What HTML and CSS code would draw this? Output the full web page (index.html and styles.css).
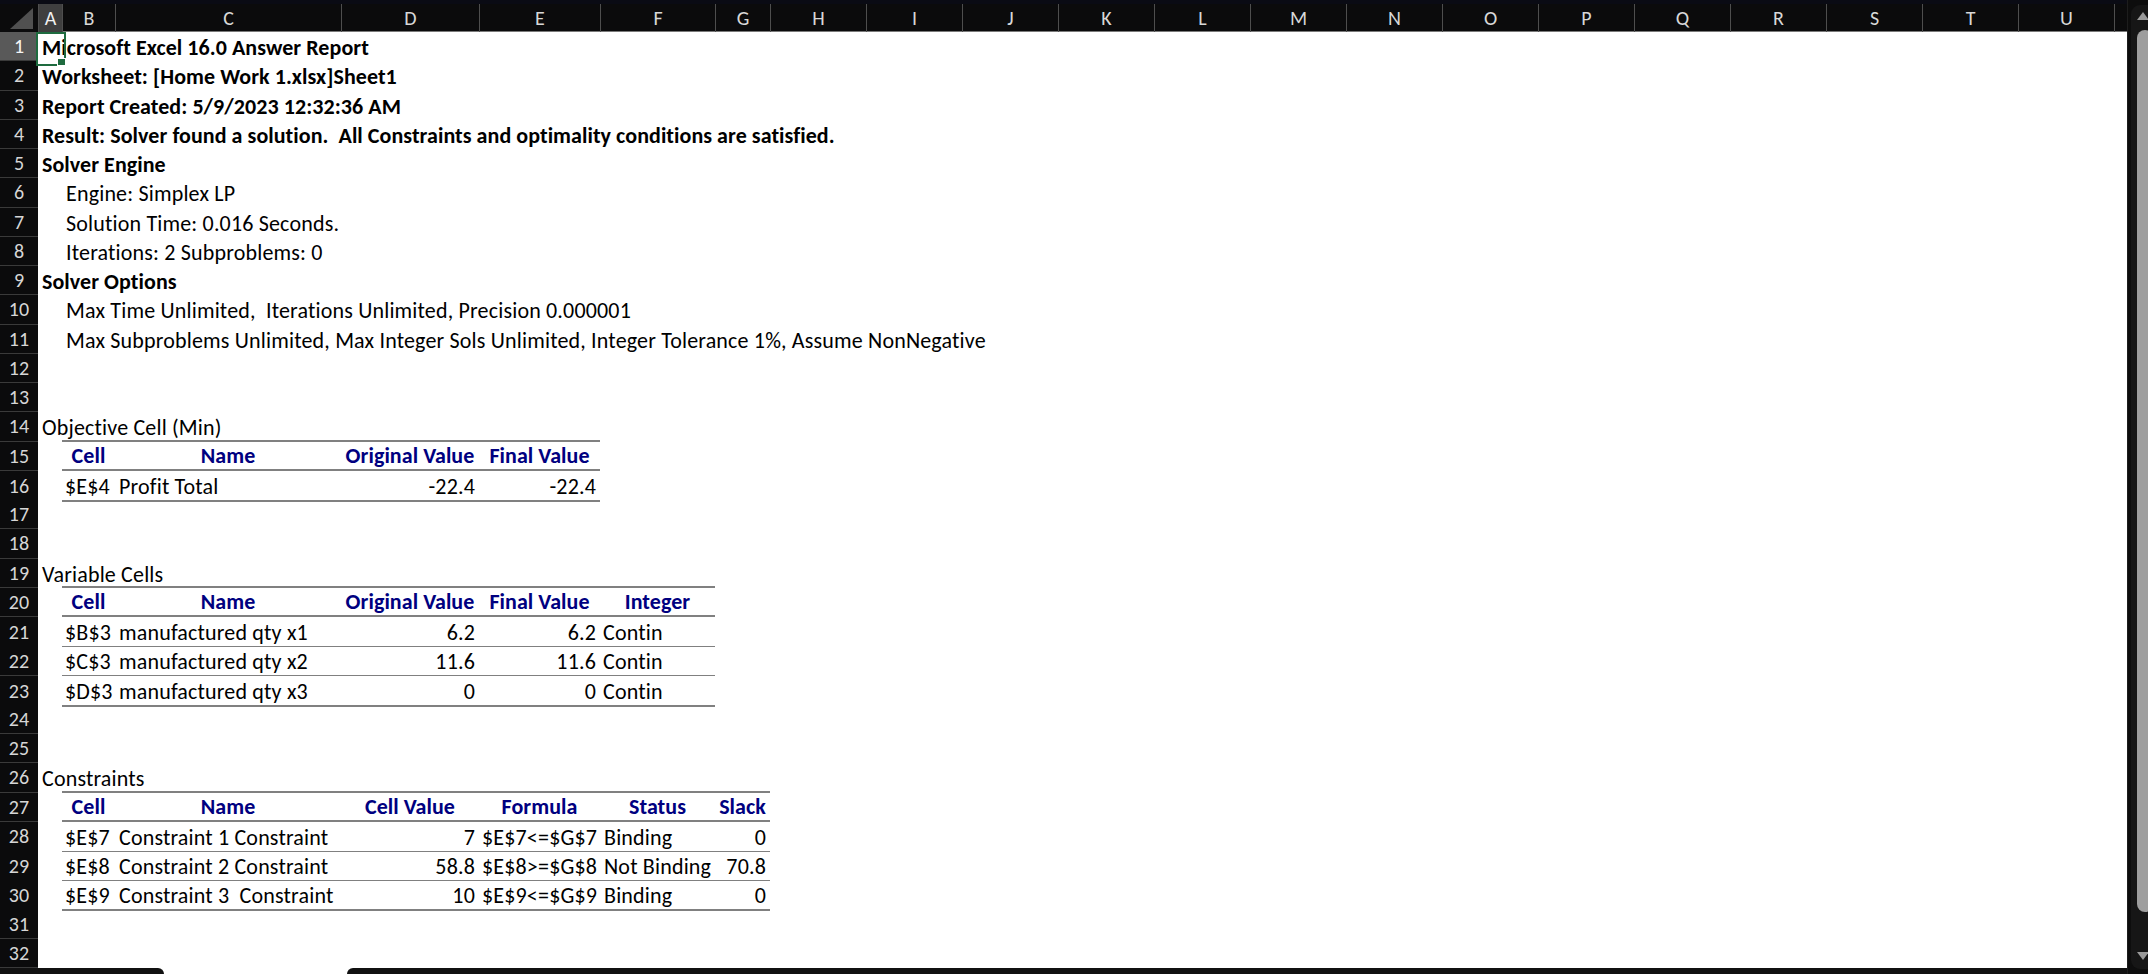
FILE: index.html
```html
<!DOCTYPE html>
<html>
<head>
<meta charset="utf-8">
<title>Answer Report</title>
<link rel="stylesheet" href="styles.css">
</head>
<body>
<div class="app">
  <div class="main">
    <div class="colhead">
      <div class="corner"><svg width="38" height="28" viewBox="0 0 38 28"><polygon points="10,25 33,25 33,4" fill="#505050"/></svg></div>
      <div class="ch sel">A</div><div class="ch">B</div><div class="ch">C</div><div class="ch">D</div><div class="ch">E</div><div class="ch">F</div><div class="ch">G</div><div class="ch">H</div><div class="ch">I</div><div class="ch">J</div><div class="ch">K</div><div class="ch">L</div><div class="ch">M</div><div class="ch">N</div><div class="ch">O</div><div class="ch">P</div><div class="ch">Q</div><div class="ch">R</div><div class="ch">S</div><div class="ch">T</div><div class="ch">U</div><div class="ch last"></div>
    </div>
    <div class="sheet">
      <div class="row"><div class="rh sel">1</div><div class="c b active">Microsoft Excel 16.0 Answer Report</div></div>
      <div class="row"><div class="rh">2</div><div class="c b">Worksheet: [Home Work 1.xlsx]Sheet1</div></div>
      <div class="row"><div class="rh">3</div><div class="c b">Report Created: 5/9/2023 12:32:36 AM</div></div>
      <div class="row"><div class="rh">4</div><div class="c b">Result: Solver found a solution.  All Constraints and optimality conditions are satisfied.</div></div>
      <div class="row"><div class="rh">5</div><div class="c b">Solver Engine</div></div>
      <div class="row"><div class="rh">6</div><div class="c"></div><div class="c">Engine: Simplex LP</div></div>
      <div class="row"><div class="rh">7</div><div class="c"></div><div class="c">Solution Time: 0.016 Seconds.</div></div>
      <div class="row"><div class="rh">8</div><div class="c"></div><div class="c">Iterations: 2 Subproblems: 0</div></div>
      <div class="row"><div class="rh">9</div><div class="c b">Solver Options</div></div>
      <div class="row"><div class="rh">10</div><div class="c"></div><div class="c">Max Time Unlimited,  Iterations Unlimited, Precision 0.000001</div></div>
      <div class="row"><div class="rh">11</div><div class="c"></div><div class="c">Max Subproblems Unlimited, Max Integer Sols Unlimited, Integer Tolerance 1%, Assume NonNegative</div></div>
      <div class="row"><div class="rh">12</div></div>
      <div class="row"><div class="rh">13</div></div>
      <div class="row"><div class="rh">14</div><div class="c">Objective Cell (Min)</div><div class="c bb2"></div><div class="c bb2"></div><div class="c bb2"></div><div class="c bb2"></div></div>
      <div class="row"><div class="rh">15</div><div class="c"></div><div class="c hd bb2">Cell</div><div class="c hd bb2">Name</div><div class="c hd bb2">Original Value</div><div class="c hd bb2">Final Value</div></div>
      <div class="row"><div class="rh">16</div><div class="c"></div><div class="c bb2 tight">$E$4</div><div class="c bb2">Profit Total</div><div class="c bb2 r">-22.4</div><div class="c bb2 r">-22.4</div></div>
      <div class="row"><div class="rh">17</div></div>
      <div class="row"><div class="rh">18</div></div>
      <div class="row"><div class="rh">19</div><div class="c">Variable Cells</div><div class="c bb2"></div><div class="c bb2"></div><div class="c bb2"></div><div class="c bb2"></div><div class="c bb2"></div></div>
      <div class="row"><div class="rh">20</div><div class="c"></div><div class="c hd bb2">Cell</div><div class="c hd bb2">Name</div><div class="c hd bb2">Original Value</div><div class="c hd bb2">Final Value</div><div class="c hd bb2">Integer</div></div>
      <div class="row"><div class="rh">21</div><div class="c"></div><div class="c bb1 tight">$B$3</div><div class="c bb1">manufactured qty x1</div><div class="c bb1 r">6.2</div><div class="c bb1 r">6.2</div><div class="c bb1 tight">Contin</div></div>
      <div class="row"><div class="rh">22</div><div class="c"></div><div class="c bb1 tight">$C$3</div><div class="c bb1">manufactured qty x2</div><div class="c bb1 r">11.6</div><div class="c bb1 r">11.6</div><div class="c bb1 tight">Contin</div></div>
      <div class="row"><div class="rh">23</div><div class="c"></div><div class="c bb2 tight">$D$3</div><div class="c bb2">manufactured qty x3</div><div class="c bb2 r">0</div><div class="c bb2 r">0</div><div class="c bb2 tight">Contin</div></div>
      <div class="row"><div class="rh">24</div></div>
      <div class="row"><div class="rh">25</div></div>
      <div class="row"><div class="rh">26</div><div class="c">Constraints</div><div class="c bb2"></div><div class="c bb2"></div><div class="c bb2"></div><div class="c bb2"></div><div class="c bb2"></div><div class="c bb2"></div></div>
      <div class="row"><div class="rh">27</div><div class="c"></div><div class="c hd bb2">Cell</div><div class="c hd bb2">Name</div><div class="c hd bb2">Cell Value</div><div class="c hd bb2">Formula</div><div class="c hd bb2">Status</div><div class="c hd bb2">Slack</div></div>
      <div class="row"><div class="rh">28</div><div class="c"></div><div class="c bb1 tight">$E$7</div><div class="c bb1">Constraint 1 Constraint</div><div class="c bb1 r">7</div><div class="c bb1 tight">$E$7&lt;=$G$7</div><div class="c bb1">Binding</div><div class="c bb1 r">0</div></div>
      <div class="row"><div class="rh">29</div><div class="c"></div><div class="c bb1 tight">$E$8</div><div class="c bb1">Constraint 2 Constraint</div><div class="c bb1 r">58.8</div><div class="c bb1 tight">$E$8&gt;=$G$8</div><div class="c bb1">Not Binding</div><div class="c bb1 r">70.8</div></div>
      <div class="row"><div class="rh">30</div><div class="c"></div><div class="c bb2 tight">$E$9</div><div class="c bb2">Constraint 3  Constraint</div><div class="c bb2 r">10</div><div class="c bb2 tight">$E$9&lt;=$G$9</div><div class="c bb2">Binding</div><div class="c bb2 r">0</div></div>
      <div class="row"><div class="rh">31</div></div>
      <div class="row"><div class="rh">32</div></div>
    </div>
    <div class="bottom"><div class="tab-left"></div><div class="tab-gap"></div><div class="tab-right"></div></div>
  </div>
  <div class="vscroll">
    <div class="track">
      <div class="arrow-up"></div>
      <div class="thumb"></div>
      <div class="arrow-down"></div>
    </div>
  </div>
</div>
</body>
</html>
```
FILE: styles.css
```css
* { box-sizing: border-box; }
html, body { margin: 0; padding: 0; }
body {
  width: 2148px;
  height: 974px;
  overflow: hidden;
  background: #0d0d0d;
  font-family: Carlito, Calibri, Lato, "Liberation Sans", sans-serif;
}
.app { display: flex; width: 2148px; height: 974px; }
.main { width: 2127px; display: flex; flex-direction: column; background: #fff; }

.colhead {
  height: 32px;
  display: grid;
  grid-template-columns: 38px 24px 53px 226px 138px 121px 115px 55px repeat(14, 96px) 1fr;
  background: #0b0b0c;
  border-top: 4px solid #0a0b14;
  border-bottom: 1px solid #7a7a7a;
}
.corner { background: #0b0b0c; }
.corner svg { display: block; }
.ch {
  color: #d8d8d8;
  font-size: 20px;
  display: flex;
  align-items: center;
  justify-content: center;
  border-left: 1px solid #4e4e4e;
}
.ch.sel { background: #3f3f3f; color: #f2f2f2; }

.sheet { flex: 1; display: flex; flex-direction: column; background: #fff; }
.row {
  height: 29.25px;
  display: grid;
  grid-template-columns: 38px 24px 53px 226px 138px 121px 115px 55px repeat(14, 96px) 1fr;
}
.rh {
  background: #0b0b0c;
  color: #d6d6d6;
  font-size: 20px;
  display: flex;
  align-items: center;
  justify-content: center;
  border-bottom: 1px solid #3a3a3a;
}
.rh.sel { background: #595959; color: #f5f5f5; }

.c {
  font-size: 22px;
  color: #000;
  white-space: pre;
  display: flex;
  align-items: center;
  padding: 2px 4px 0 4px;
  min-width: 0;
  letter-spacing: 0.17px;
}
.c.b { font-weight: bold; letter-spacing: 0.06px; }
.c.tight { padding-left: 3px; }
.c.r { justify-content: flex-end; }
.c.hd { justify-content: center; font-weight: bold; color: #000080; letter-spacing: 0.06px; padding-top: 0; }
.bb2 { border-bottom: 2px solid #808080; }
.bb1 { border-bottom: 1px solid #808080; }

.active { position: relative; }
.active::after {
  content: "";
  position: absolute;
  left: -2px;
  top: 0;
  width: 26px;
  height: 30px;
  border: 2px solid #1e6b3f;
}
.active::before {
  content: "";
  position: absolute;
  left: 19px;
  top: 26px;
  width: 7px;
  height: 6px;
  background: #1e6b3f;
  border: 1px solid #fff;
  z-index: 2;
}

.bottom { height: 6px; display: flex; background: #fff; }
.tab-left { width: 164px; background: #111; border-top-right-radius: 6px; }
.tab-gap { width: 183px; }
.tab-right { flex: 1; background: #111; border-top-left-radius: 6px; }

.vscroll { width: 21px; background: #0d0d0d; overflow: hidden; border-left: 1px solid #1d1d1d; }
.track {
  margin: 5px 0 0 3px;
  width: 30px;
  height: 964px;
  background: #161616;
  border-radius: 9px;
  display: flex;
  flex-direction: column;
}
.arrow-up {
  margin: 7px 0 0 6px;
  width: 0; height: 0;
  border-left: 6px solid transparent;
  border-right: 6px solid transparent;
  border-bottom: 8px solid #9a9a9a;
}
.thumb {
  margin: 10px 0 0 6px;
  width: 16px;
  height: 882px;
  background: #9e9e9e;
  border-radius: 8px;
}
.arrow-down {
  margin: 40px 0 0 6px;
  width: 0; height: 0;
  border-left: 6px solid transparent;
  border-right: 6px solid transparent;
  border-top: 8px solid #9a9a9a;
}
```
